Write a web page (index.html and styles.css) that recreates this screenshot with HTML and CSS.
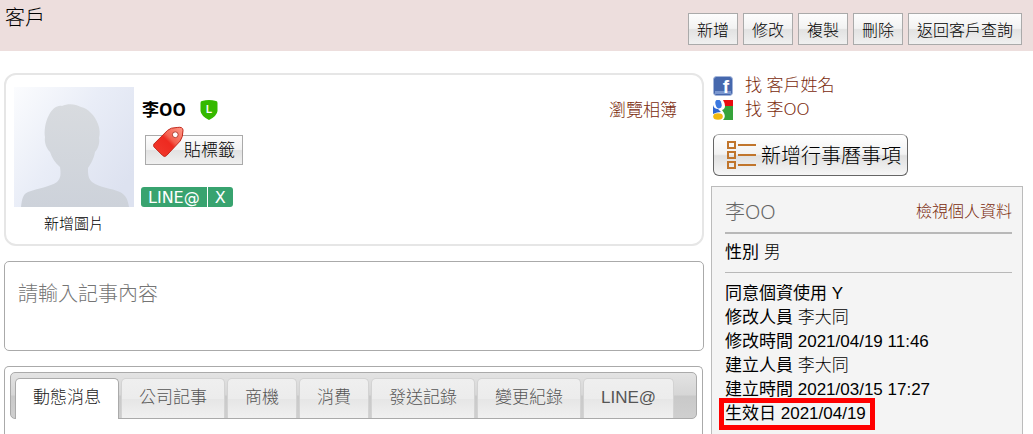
FILE: index.html
```html
<!DOCTYPE html>
<html lang="zh-Hant">

<head>
    <meta charset="UTF-8">
    <meta name="viewport" content="width=device-width, initial-scale=1.0">
    <title>客戶</title>
    <link rel="stylesheet" href="styles.css">
</head>

<body>
    <header class="page-header">
        <h1>客戶</h1>
        <div class="actions">
            <button type="button" class="btn">新增</button>
            <button type="button" class="btn">修改</button>
            <button type="button" class="btn">複製</button>
            <button type="button" class="btn">刪除</button>
            <button type="button" class="btn">返回客戶查詢</button>
        </div>
    </header>

    <div class="layout">
        <main class="main">
            <section class="profile">
                <div class="photo">
                    <svg class="avatar" viewBox="0 0 120 120">
                        <defs>
                            <linearGradient id="avatar-bg" x1="0" y1="0" x2="1" y2="0.7">
                                <stop offset="0" stop-color="#fbfcfe" />
                                <stop offset="0.5" stop-color="#e9edf7" />
                                <stop offset="1" stop-color="#dde2f0" />
                            </linearGradient>
                            <linearGradient id="avatar-body" x1="0" y1="0" x2="0" y2="1">
                                <stop offset="0" stop-color="#d8dbdf" />
                                <stop offset="1" stop-color="#cdd2da" />
                            </linearGradient>
                        </defs>
                        <rect width="120" height="120" fill="url(#avatar-bg)" />
                        <path fill="url(#avatar-body)" d="M7 120 C8 112 9 107 14 105 C24 101 36 100 43 95 C47 91 47 87 46 80 C41 76 38 71 36 65 C33 62 30 56 31 50 C30 45 31 35 35 28 C38 22 43 18 48 19 C54 16 62 17 67 20 C74 21 81 29 84 37 C86 42 86 47 85 51 C86 56 84 62 81 65 C80 72 76 78 74 81 C74 87 74 91 78 95 C86 101 97 101 106 105 C112 108 114 113 115 120 Z" />
                    </svg>
                    <a href="#" class="photo-link">新增圖片</a>
                </div>
                <div class="info">
                    <div class="name-row">
                        <strong class="name">李OO</strong>
                        <svg class="shield" viewBox="0 0 18 20">
                            <path fill="#35b900" d="M2 1 Q9 -1 16 1 Q17.500 1 17.500 3 L17.500 11 Q17 16 9 20 Q1 16 .500 11 L.500 3 Q.500 1 2 1 Z" />
                            <text x="9" y="13" text-anchor="middle">L</text>
                        </svg>
                    </div>
                    <button type="button" class="btn tag-btn">
                        <svg class="tag-icon" viewBox="0 0 32 32">
                            <defs>
                                <linearGradient id="tag-red" x1="1" y1="0" x2="0" y2="1">
                                    <stop offset="0" stop-color="#ff9a8a" />
                                    <stop offset="0.4" stop-color="#f4604f" />
                                    <stop offset="0.5" stop-color="#ee2a20" />
                                    <stop offset="1" stop-color="#f23a2e" />
                                </linearGradient>
                            </defs>
                            <path fill="url(#tag-red)" stroke="#c02418" stroke-linejoin="round" d="M1 18 L15 4 Q18 1 25 1 Q31 0 31 4 Q31 11 28 15 L14 30 Q12 32 10 30 L1 21 Q0 20 1 18 Z" />
                            <circle cx="23" cy="8.500" r="3" fill="#fff" stroke="#b23a2c" />
                        </svg>
                        <span>貼標籤</span>
                    </button>
                    <div class="chip">
                        <span>LINE@</span>
                        <button type="button" class="chip-remove">X</button>
                    </div>
                </div>
                <a href="#" class="album">瀏覽相簿</a>
            </section>

            <textarea class="note" aria-label="記事內容" placeholder="請輸入記事內容"></textarea>

            <section class="tab-panel">
                <nav class="tabs">
                    <a href="#" class="tab active">動態消息</a>
                    <a href="#" class="tab">公司記事</a>
                    <a href="#" class="tab">商機</a>
                    <a href="#" class="tab">消費</a>
                    <a href="#" class="tab">發送記錄</a>
                    <a href="#" class="tab">變更紀錄</a>
                    <a href="#" class="tab">LINE@</a>
                </nav>
            </section>
        </main>

        <aside class="side">
            <ul class="search-links">
                <li>
                    <svg class="site-icon" viewBox="0 0 20 20">
                        <rect x=".500" y=".500" width="19" height="19" rx="3" fill="#4668ad" stroke="#a3b5da" />
                        <rect x="2" y="15" width="16" height="3" fill="#7b97cf" />
                        <text x="13" y="17" text-anchor="middle" class="fb-letter">f</text>
                    </svg>
                    <a href="#">找 客戶姓名</a>
                </li>
                <li>
                    <svg class="site-icon" viewBox="0 0 20 20">
                        <rect width="20" height="20" fill="#fff" />
                        <path fill="#2f66d0" d="M0 5 Q1 9 5 9 L8 12 Q4 12 0 14 Z" />
                        <path fill="#e80c10" d="M10 0 H20 V6 H12 Q12 3 10 0 Z" />
                        <path fill="#35a33a" d="M12 6 H20 V20 H10 Q13 17 11 13 L9 10 Q12 9 12 6 Z" />
                        <ellipse cx="5.500" cy="4" rx="3" ry="4.500" transform="rotate(-15 5.500 4)" fill="#3b78e0" />
                        <ellipse cx="5" cy="16.500" rx="4.800" ry="3.300" fill="#f2b90f" />
                    </svg>
                    <a href="#">找 李OO</a>
                </li>
            </ul>

            <button type="button" class="calendar-btn">
                <svg class="list-icon" viewBox="0 0 30 30">
                    <g fill="none" stroke="#c0752c" stroke-width="2">
                        <rect x="2" y="2" width="7" height="6" />
                        <rect x="2" y="12" width="7" height="6" />
                        <rect x="2" y="22" width="7" height="6" />
                        <path d="M12 5 H30 M12 15 H30 M12 25 H30" />
                    </g>
                </svg>
                <span>新增行事曆事項</span>
            </button>

            <section class="details">
                <div class="details-head">
                    <h2>李OO</h2>
                    <a href="#">檢視個人資料</a>
                </div>
                <p class="gender"><b>性別</b> 男</p>
                <ul class="records">
                    <li><b>同意個資使用</b> Y</li>
                    <li><b>修改人員</b> 李大同</li>
                    <li><b>修改時間</b> 2021/04/19 11:46</li>
                    <li><b>建立人員</b> 李大同</li>
                    <li><b>建立時間</b> 2021/03/15 17:27</li>
                    <li><span class="marked"><b>生效日</b> 2021/04/19</span></li>
                </ul>
            </section>
        </aside>
    </div>
</body>

</html>
```
FILE: styles.css
```css
* {
    box-sizing: border-box;
}

body {
    margin: 0;
    min-height: 100vh;
    display: flex;
    flex-direction: column;
    background: #fff;
    color: #000;
    font-family: "Liberation Sans", "Noto Sans CJK TC", sans-serif;
    font-size: 17px;
    font-weight: 300;
    line-height: 24px;
}

h1,
h2,
p,
ul {
    margin: 0;
    padding: 0;
    font-weight: 300;
}

ul {
    list-style: none;
}

svg {
    display: block;
    flex: none;
}

a {
    color: #7a2a0c;
    text-decoration: none;
}

button {
    font-family: inherit;
    font-weight: inherit;
    color: #000;
    cursor: pointer;
}

.page-header {
    display: flex;
    justify-content: space-between;
    padding: 6px 11px 6px 5px;
    background: #eddedd;
}

.page-header h1 {
    font-size: 20px;
    line-height: 24px;
}

.actions {
    display: flex;
    gap: 5px;
    padding-top: 7px;
}

.btn {
    height: 32px;
    padding: 0 8px 1px;
    border: 1px solid #aaa;
    background: linear-gradient(#fdfdfd 0%, #f2f2f2 48%, #e2e2e2 52%, #f0f0f0 100%);
    font-size: 16px;
    white-space: nowrap;
}

.layout {
    flex: 1;
    display: flex;
    gap: 7px;
    padding: 22px 10px 0 4px;
}

.main {
    flex: 1;
    min-width: 0;
    display: flex;
    flex-direction: column;
    gap: 15px;
}

.profile {
    display: flex;
    gap: 7px;
    height: 173px;
    padding: 12px 25px 0 8px;
    border: 2px solid #e6e6e6;
    border-radius: 12px;
}

.photo {
    width: 120px;
    text-align: center;
}

.avatar {
    width: 120px;
    height: 120px;
}

.photo-link {
    display: block;
    margin-top: 5px;
    color: #000;
    font-size: 15px;
}

.info {
    flex: 1;
    display: flex;
    flex-direction: column;
    align-items: flex-start;
}

.name-row {
    display: flex;
    align-items: center;
    gap: 14px;
    height: 44px;
    padding: 1px 0 0 1px;
}

.name,
.search-links a,
.details-head h2 {
    font-family: "Noto Sans", "Noto Sans CJK TC", sans-serif;
}

.name {
    font-weight: 700;
}

.shield {
    width: 18px;
    height: 20px;
}

.shield text {
    fill: #fff;
    font-size: 10px;
    font-weight: bold;
}

.tag-btn {
    display: flex;
    align-items: center;
    height: 30px;
    margin: 4px 0 22px 4px;
    padding: 0 7px 3px;
    font-size: 17px;
}

.tag-icon {
    width: 31px;
    height: 32px;
    margin-top: -14px;
}

.chip {
    display: flex;
    height: 20px;
    border-radius: 3px;
    overflow: hidden;
    color: #fff;
    font-family: "DejaVu Sans", sans-serif;
    font-size: 16px;
    font-weight: 400;
    line-height: 22px;
}

.chip span,
.chip-remove {
    padding: 0 7px;
    background: #38a36f;
}

.chip-remove {
    border: 0;
    border-left: 1px solid #fff;
    color: #fff;
    font-size: 16px;
    line-height: 22px;
}

.album {
    padding-top: 12px;
}

.note {
    display: block;
    width: 100%;
    height: 90px;
    padding: 20px 13px;
    border: 1px solid #aaa;
    border-radius: 5px;
    resize: none;
    font: inherit;
    font-size: 20px;
}

.note::placeholder {
    color: #757575;
}

.tab-panel {
    flex: 1;
    padding: 5px;
    margin-right: 1px;
    border: 1px solid #aaa;
    border-bottom: 0;
    border-radius: 5px 5px 0 0;
}

.tabs {
    display: flex;
    gap: 2px;
    height: 47px;
    padding: 5px 4px 0;
    border: 1px solid #aaa;
    border-radius: 5px;
    background: linear-gradient(#e3e3e3, #d6d6d6 48%, #c9c9c9 52%, #cfcfcf);
}

.tab {
    height: 40px;
    padding: 0 17px;
    border: 1px solid #d3d3d3;
    border-bottom: 0;
    border-radius: 5px 5px 0 0;
    background: linear-gradient(#efefef 0%, #ececec 50%, #e6e6e6 52%, #f0f0f0 100%);
    color: #555;
    line-height: 38px;
    white-space: nowrap;
}

.tab.active {
    height: 41px;
    border-color: #aaa;
    background: #fff;
    color: #212121;
}

.side {
    width: 312px;
    display: flex;
    flex-direction: column;
    align-items: flex-start;
}

.search-links {
    padding-left: 2px;
}

.search-links li {
    display: flex;
    align-items: center;
    gap: 12px;
    height: 24px;
}

.site-icon {
    width: 20px;
    height: 20px;
    margin-top: 2px;
}

.fb-letter {
    fill: #fff;
    font-size: 19px;
    font-weight: bold;
}

.calendar-btn {
    display: flex;
    align-items: center;
    gap: 5px;
    height: 42px;
    margin: 13px 0 10px 2px;
    padding: 0 6px 2px 12px;
    border: 1px solid #666;
    border-top-color: #aaa;
    border-radius: 6px;
    background: linear-gradient(#fff 0%, #f2f2f2 48%, #e0e0e0 52%, #f6f6f6 100%);
    font-size: 20px;
    white-space: nowrap;
}

.list-icon {
    width: 30px;
    height: 30px;
    margin-top: 2px;
}

.details {
    flex: 1;
    width: 100%;
    padding: 10px 10px 0 13px;
    border: 1px solid #bbb;
    border-bottom: 0;
    background: #f4f4f4;
}

.details-head {
    display: flex;
    justify-content: space-between;
    align-items: center;
    height: 37px;
    padding-bottom: 6px;
    border-bottom: 2px solid #b8b8b8;
}

.details-head h2 {
    color: #666;
    font-size: 20px;
}

.details-head a {
    font-size: 16px;
}

.details b {
    font-weight: 400;
}

.gender {
    padding: 7px 0;
    border-bottom: 1px solid #b8b8b8;
}

.records {
    padding-top: 9px;
}

/* effective date is called out with a red frame */
.marked {
    display: inline-block;
    margin: 0 -2px;
    padding: 0 5px 0 2px;
    outline: 5px solid #f00;
    outline-offset: -1px;
}
```
